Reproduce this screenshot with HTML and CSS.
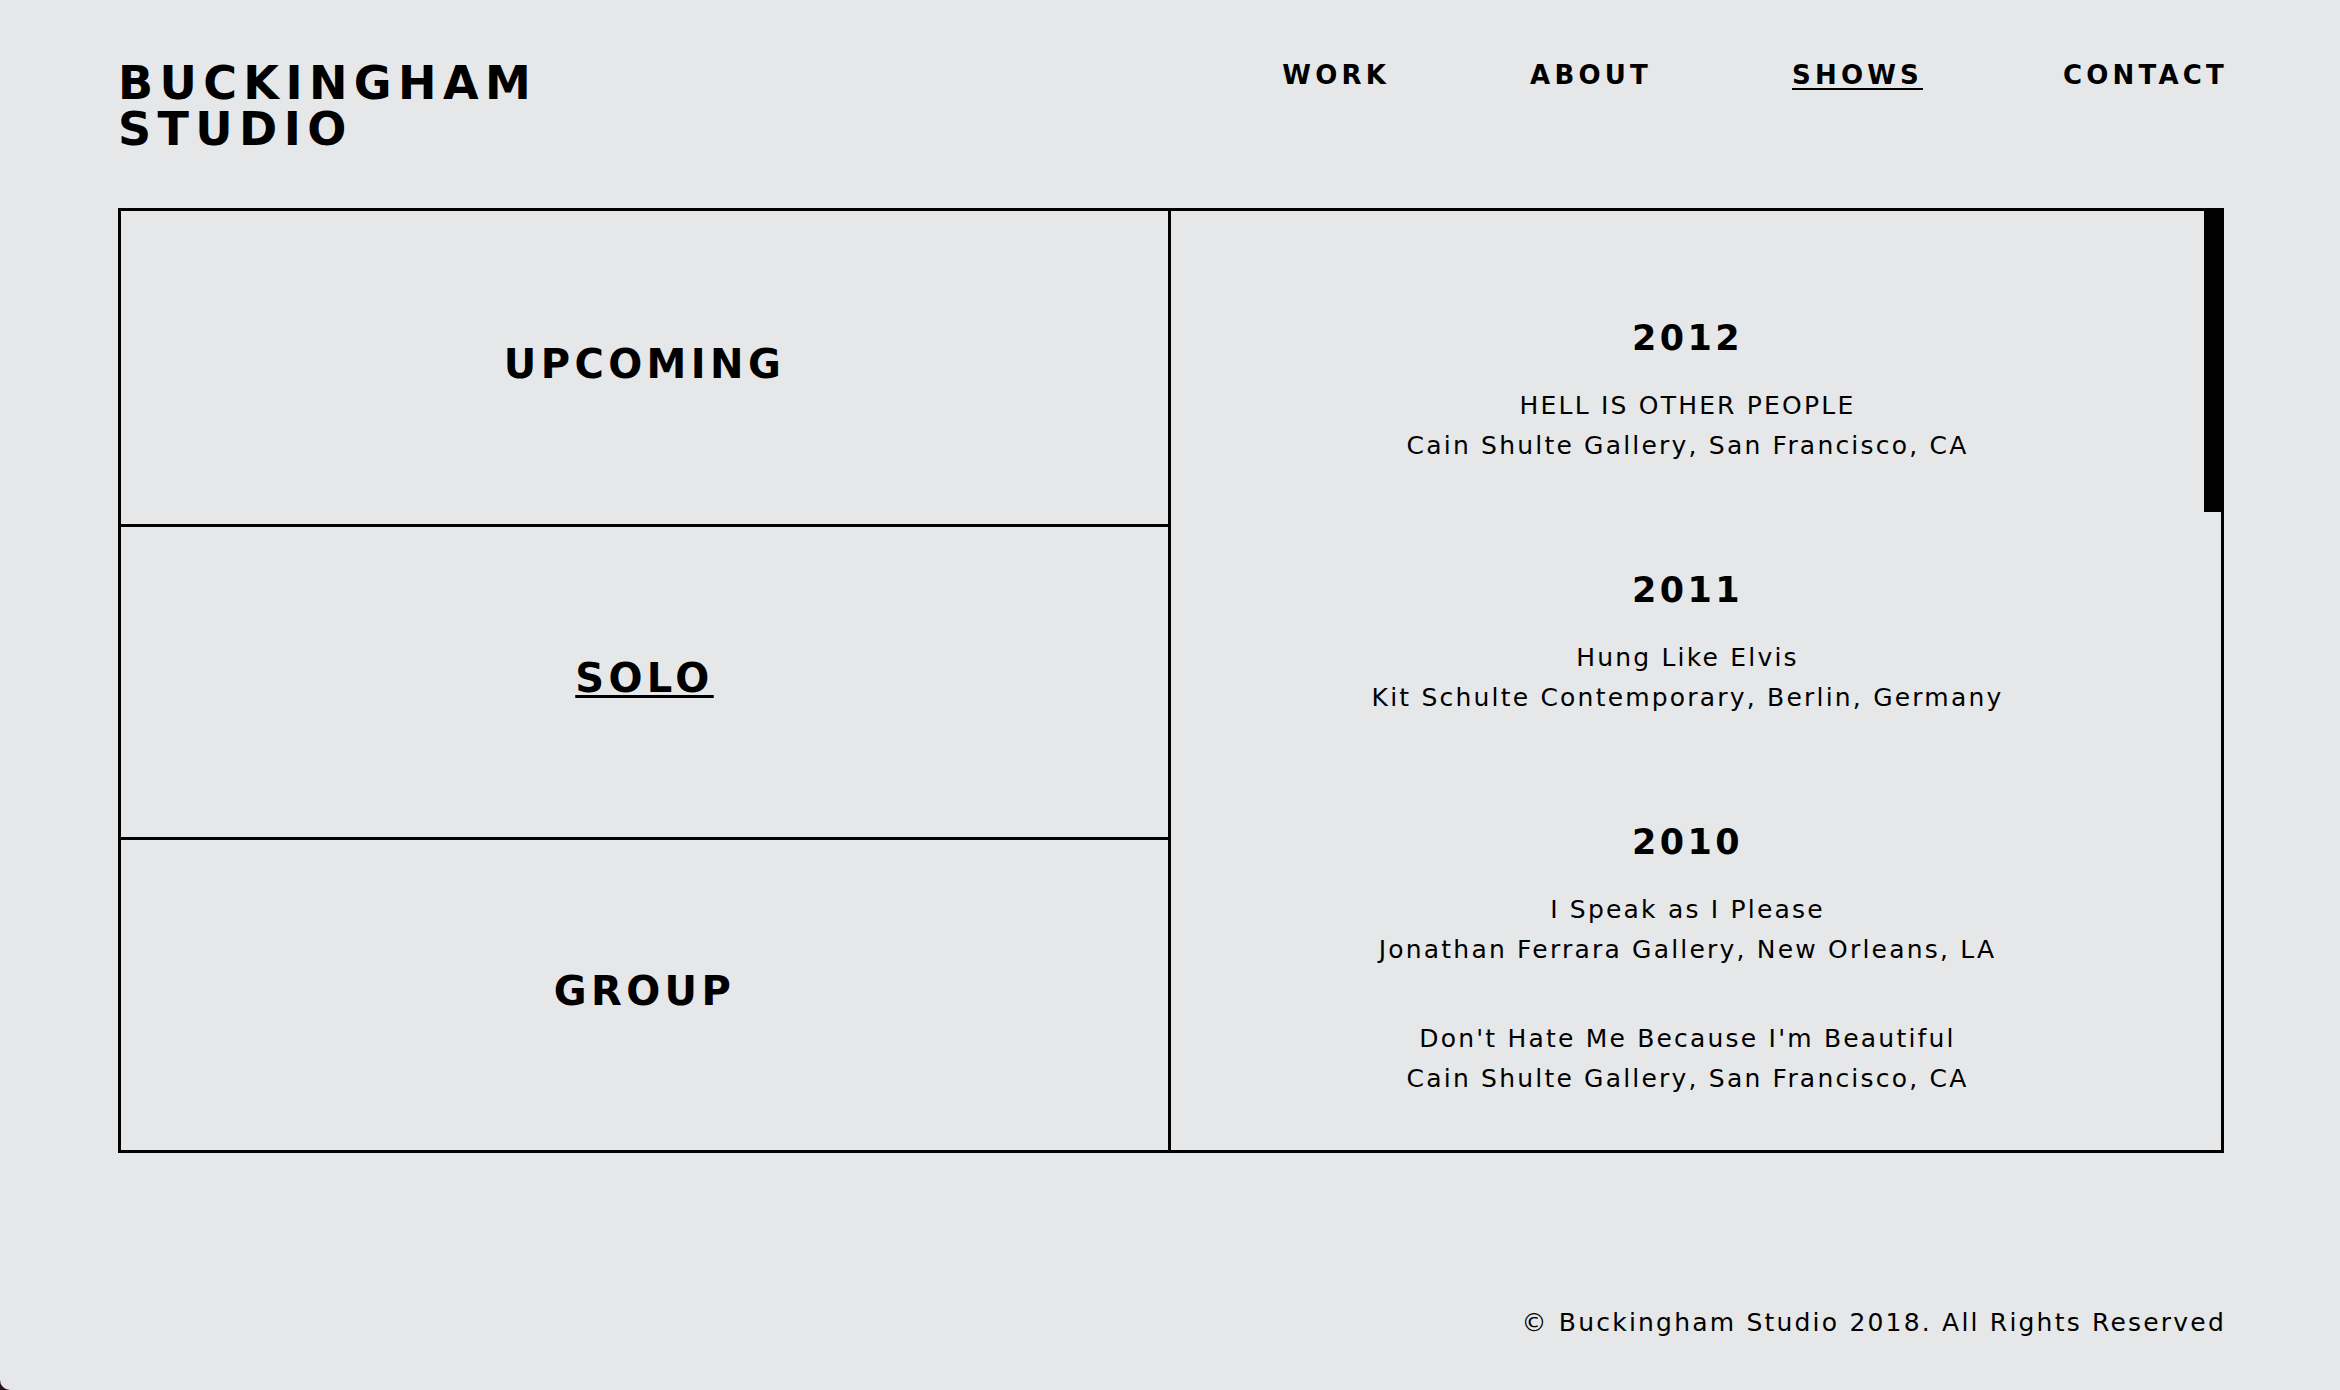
FILE: index.html
```html
<!DOCTYPE html>
<html lang="en">
<head>
<meta charset="UTF-8" />
<meta name="viewport" content="width=device-width, initial-scale=1" />
<title>Shows — Buckingham Studio</title>
<link rel="stylesheet" href="styles.css">
</head>
<body>
  <div class="page">
    <header class="site-header">
      <a class="logo" href="#">BUCKINGHAM<br>STUDIO</a>
      <nav class="nav" aria-label="Main">
        <a href="#">WORK</a>
        <a href="#">ABOUT</a>
        <a href="#" class="active">SHOWS</a>
        <a href="#">CONTACT</a>
      </nav>
    </header>

    <main class="shows">
      <div class="filters">
        <a href="#" class="filter">UPCOMING</a>
        <a href="#" class="filter active">SOLO</a>
        <a href="#" class="filter">GROUP</a>
      </div>

      <div class="list">
        <section class="year">
          <h2>2012</h2>
          <div class="show">
            <p>HELL IS OTHER PEOPLE</p>
            <p>Cain Shulte Gallery, San Francisco, CA</p>
          </div>
        </section>

        <section class="year">
          <h2>2011</h2>
          <div class="show">
            <p>Hung Like Elvis</p>
            <p>Kit Schulte Contemporary, Berlin, Germany</p>
          </div>
        </section>

        <section class="year">
          <h2>2010</h2>
          <div class="show">
            <p>I Speak as I Please</p>
            <p>Jonathan Ferrara Gallery, New Orleans, LA</p>
          </div>
          <div class="show">
            <p>Don't Hate Me Because I'm Beautiful</p>
            <p>Cain Shulte Gallery, San Francisco, CA</p>
          </div>
        </section>
      </div>

      <span class="scroll-thumb" aria-hidden="true"></span>
    </main>

    <footer class="site-footer">
      <p>© Buckingham Studio 2018. All Rights Reserved</p>
    </footer>
  </div>
</body>
</html>
```

FILE: styles.css
```css
html {
  background: #2a1020;
}

body {
  margin: 0;
  font-family: 'DejaVu Sans', 'Liberation Sans', sans-serif;
  color: #000;
}

.page {
  background: #e6e7e9;
  min-height: 100vh;
  box-sizing: border-box;
  padding: 60px 116px 0 118px;
  border-bottom-left-radius: 10px;
}

a {
  color: inherit;
  text-decoration: none;
}

.site-header {
  display: flex;
  justify-content: space-between;
  align-items: flex-start;
}

.logo {
  font-size: 46px;
  line-height: 46px;
  font-weight: 700;
  letter-spacing: 6.4px;
}

.nav {
  display: flex;
  gap: 140px;
  padding-top: 2px;
  margin-right: -4px;
}

.nav a {
  font-size: 26px;
  line-height: 26px;
  font-weight: 700;
  letter-spacing: 4.2px;
}

.nav a.active {
  text-decoration: underline;
  text-decoration-thickness: 2px;
  text-underline-offset: 4px;
}

.shows {
  position: relative;
  margin-top: 56px;
  height: 945px;
  box-sizing: border-box;
  border: 3px solid #000;
  display: grid;
  grid-template-columns: 1fr 1fr;
}

.filters {
  display: grid;
  grid-template-rows: 1fr 1fr 1fr;
  border-right: 3px solid #000;
}

.filter {
  display: flex;
  justify-content: center;
  align-items: center;
  font-size: 40px;
  font-weight: 700;
  letter-spacing: 4.4px;
  padding-bottom: 8px;
}

.filter.active {
  text-decoration: underline;
  text-decoration-thickness: 3px;
  text-underline-offset: 3px;
}

.filter + .filter {
  border-top: 3px solid #000;
}

.list {
  overflow-y: auto;
  scrollbar-width: none;
  text-align: center;
  padding: 107px 17px 0 0;
}

.list::-webkit-scrollbar {
  display: none;
}

.scroll-thumb {
  position: absolute;
  top: -3px;
  right: -3px;
  width: 20px;
  height: 304px;
  background: #000;
}

.year {
  margin-bottom: 104px;
}

.year:last-child {
  margin-bottom: 0;
}

.year h2 {
  margin: 0 0 28px;
  font-size: 35px;
  line-height: 40px;
  font-weight: 700;
  letter-spacing: 3.4px;
}

.show p {
  margin: 0;
  font-size: 25px;
  line-height: 40px;
  letter-spacing: 2.2px;
}

.show + .show {
  margin-top: 49px;
}

.site-footer {
  margin-top: 150px;
  text-align: right;
}

.site-footer p {
  margin: 0 -2px 0 0;
  font-size: 25px;
  line-height: 40px;
  letter-spacing: 2.2px;
}
```
